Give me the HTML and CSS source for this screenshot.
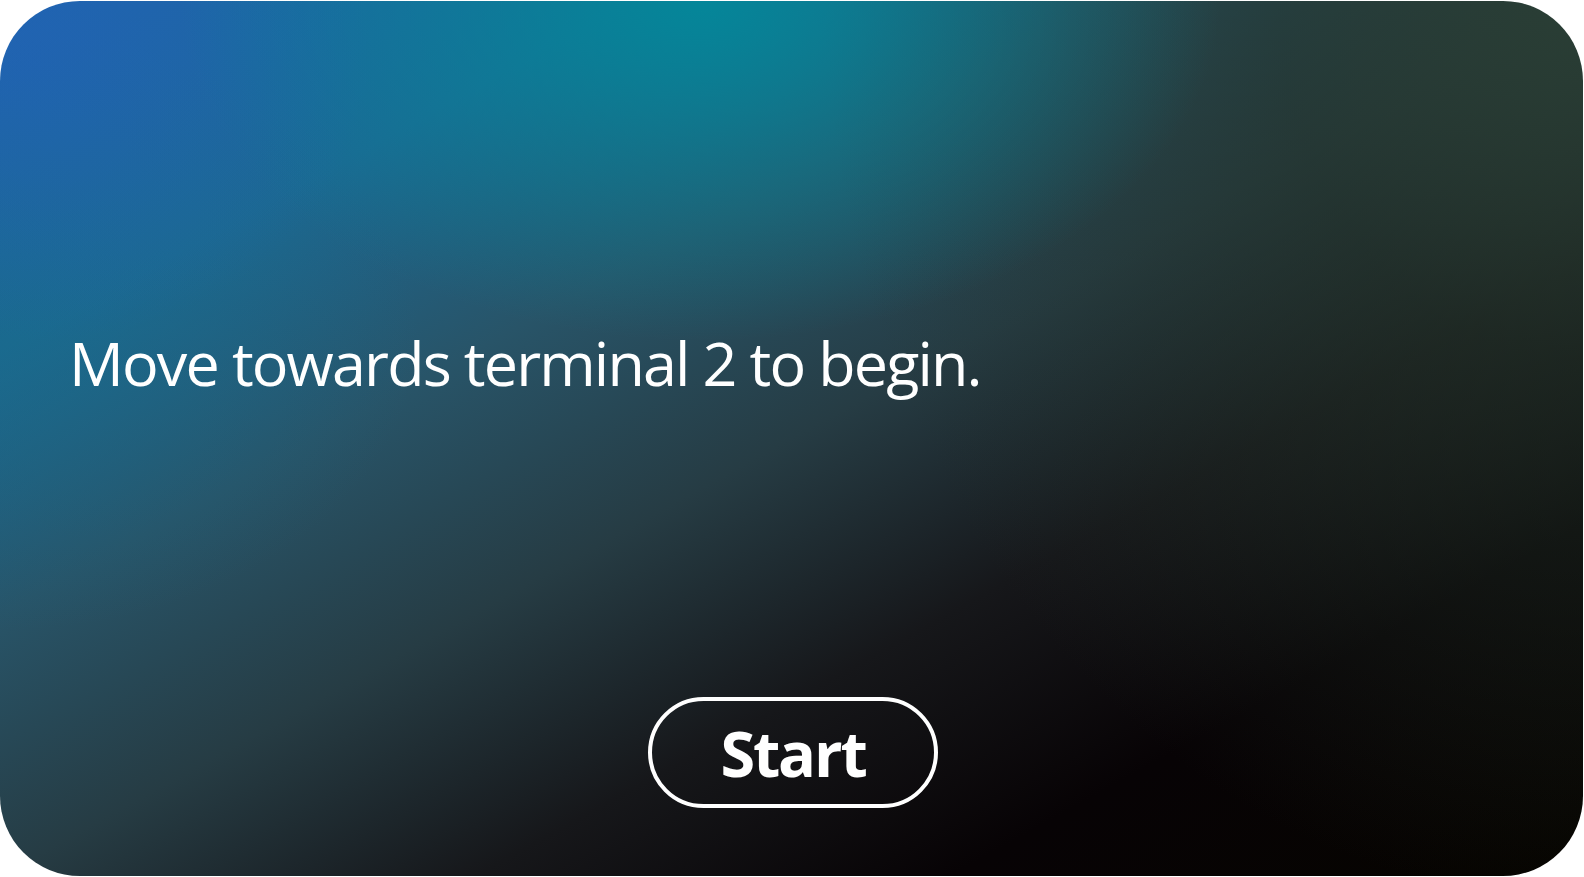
FILE: index.html
```html
<!DOCTYPE html>
<html lang="en">
<head>
<meta charset="utf-8">
<title>Start</title>
<link rel="stylesheet" href="styles.css">
</head>
<body>
<main class="card">
  <p class="message">Move towards terminal 2 to begin.</p>
  <button class="start" type="button">Start</button>
</main>
</body>
</html>
```
FILE: styles.css
```css
html, body {
  margin: 0;
  padding: 0;
  background: #ffffff;
}

body {
  width: 1584px;
  height: 877px;
  overflow: hidden;
}

.card {
  box-sizing: border-box;
  width: 1583px;
  height: 875px;
  margin-top: 1px;
  border-radius: 80px;
  overflow: hidden;
  display: flex;
  flex-direction: column;
  padding: 0 66px 0 69px;
  background-color: #050300;
  background-image:
    radial-gradient(ellipse 520px 340px at 700px 0px, rgba(3, 136, 154, 0.95) 0%, rgba(3, 136, 154, 0.5) 45%, rgba(3, 136, 154, 0) 100%),
    radial-gradient(ellipse 340px 280px at 30px 60px, rgba(34, 98, 184, 0.55) 0%, rgba(34, 98, 184, 0) 100%),
    radial-gradient(ellipse 420px 300px at 0px 330px, rgba(24, 108, 138, 0.5) 0%, rgba(24, 108, 138, 0) 100%),
    radial-gradient(ellipse 760px 900px at 1584px 0px, rgba(42, 62, 52, 0.95) 0%, rgba(36, 52, 42, 0.6) 40%, rgba(30, 40, 30, 0) 100%),
    linear-gradient(to bottom right, #1f64ae 0%, #1c6892 20%, #285468 35%, #263c44 50%, #16171a 65%, #070305 80%, #060400 100%);
  font-family: "Open Sans", "Liberation Sans", sans-serif;
  color: #ffffff;
}

.message {
  margin: 325px 0 0 0;
  font-size: 61px;
  line-height: 74px;
  font-weight: 400;
  letter-spacing: -1.85px;
  white-space: nowrap;
}

.start {
  align-self: center;
  box-sizing: border-box;
  width: 290px;
  height: 111px;
  margin-top: 297px;
  padding: 0;
  border: 4px solid #ffffff;
  border-radius: 56px;
  background: transparent;
  color: #ffffff;
  font-family: "Open Sans", "Liberation Sans", sans-serif;
  font-size: 63px;
  line-height: 101px;
  font-weight: 700;
  letter-spacing: -2.2px;
  cursor: pointer;
}
```
